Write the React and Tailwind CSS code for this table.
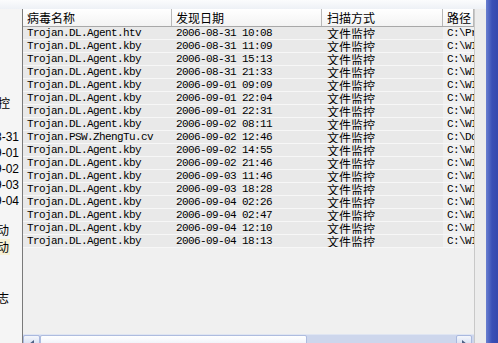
import React from "react";

const rows = [
  ["Trojan.DL.Agent.htv", "2006-08-31 10:08", "C:\\Program Files"],
  ["Trojan.DL.Agent.kby", "2006-08-31 11:09", "C:\\WINDOWS"],
  ["Trojan.DL.Agent.kby", "2006-08-31 15:13", "C:\\WINDOWS"],
  ["Trojan.DL.Agent.kby", "2006-08-31 21:33", "C:\\WINDOWS"],
  ["Trojan.DL.Agent.kby", "2006-09-01 09:09", "C:\\WINDOWS"],
  ["Trojan.DL.Agent.kby", "2006-09-01 22:04", "C:\\WINDOWS"],
  ["Trojan.DL.Agent.kby", "2006-09-01 22:31", "C:\\WINDOWS"],
  ["Trojan.DL.Agent.kby", "2006-09-02 08:11", "C:\\WINDOWS"],
  ["Trojan.PSW.ZhengTu.cv", "2006-09-02 12:46", "C:\\Documents"],
  ["Trojan.DL.Agent.kby", "2006-09-02 14:55", "C:\\WINDOWS"],
  ["Trojan.DL.Agent.kby", "2006-09-02 21:46", "C:\\WINDOWS"],
  ["Trojan.DL.Agent.kby", "2006-09-03 11:46", "C:\\WINDOWS"],
  ["Trojan.DL.Agent.kby", "2006-09-03 18:28", "C:\\WINDOWS"],
  ["Trojan.DL.Agent.kby", "2006-09-04 02:26", "C:\\WINDOWS"],
  ["Trojan.DL.Agent.kby", "2006-09-04 02:47", "C:\\WINDOWS"],
  ["Trojan.DL.Agent.kby", "2006-09-04 12:10", "C:\\WINDOWS"],
  ["Trojan.DL.Agent.kby", "2006-09-04 18:13", "C:\\WINDOWS"],
];

const cjk = "font-['SimSun','Noto_Sans_CJK_SC',sans-serif]";
const mono = "font-['Liberation_Mono','Noto_Sans_CJK_SC',monospace] text-[11px] tracking-[-0.6px]";

// 左侧被裁掉的面板，只露出一点文字
function SidePanel() {
  const item = "flex justify-end overflow-hidden whitespace-nowrap h-[16px] leading-[16px] text-[12px] text-black";
  const date = `${item} pr-[3px] font-['Liberation_Sans',sans-serif]`;
  return (
    <div className={`w-[22px] shrink-0 bg-[#f5f5f5] flex flex-col ${cjk}`}>
      <div className={`${item} mt-[86px] pr-[12px]`}>监控</div>
      <div className={`${date} mt-[18px]`}>2006-08-31</div>
      <div className={date}>2006-09-01</div>
      <div className={date}>2006-09-02</div>
      <div className={date}>2006-09-03</div>
      <div className={date}>2006-09-04</div>
      <div className={`${item} mt-[13px] pr-[13px]`}>自动</div>
      <div className={`${item} mt-[1px] pr-[12px]`}>
        <span className="bg-[#f7f1d6] pr-[1px]">自动</span>
      </div>
      <div className={`${item} mt-[35px] pr-[13px]`}>日志</div>
    </div>
  );
}

function Header() {
  const cell = "h-full flex items-center pl-[4px] border-r border-[#b8b8b8] shrink-0 overflow-hidden whitespace-nowrap";
  return (
    <div className={`flex h-[18px] bg-gradient-to-b from-white to-[#f3f3f3] border-b border-[#a8a8a8] text-[12px] text-black ${cjk}`}>
      <div className={`${cell} w-[149px]`}>病毒名称</div>
      <div className={`${cell} w-[150px]`}>发现日期</div>
      <div className={`${cell} w-[121px] pl-[5px]`}>扫描方式</div>
      <div className={`${cell} w-[31px]`}>路径</div>
    </div>
  );
}

function Row({ name, date, path }) {
  return (
    <div className="flex h-[13px] leading-[13px] border-b border-[#f7f7f7] text-black">
      <div className={`w-[149px] shrink-0 pl-[4px] bg-[#e9e9e9] whitespace-nowrap overflow-hidden ${mono}`}>{name}</div>
      <div className={`w-[150px] shrink-0 pl-[4px] bg-[#e9e9e9] whitespace-nowrap overflow-hidden ${mono}`}>{date}</div>
      <div className={`w-[121px] shrink-0 pl-[5px] bg-[#e9e9e9] text-[12px] leading-[13px] whitespace-nowrap overflow-hidden ${cjk}`}>文件监控</div>
      <div className={`w-[31px] shrink-0 pl-[4px] bg-[#f0f0f0] overflow-hidden whitespace-nowrap ${mono}`}>{path}</div>
    </div>
  );
}

function HScrollBar() {
  return (
    <div className="h-[9px] shrink-0 flex bg-[#cdd6ec] overflow-hidden items-start border-t border-[#dfe5f2]">
      <div className="w-[17px] h-[17px] shrink-0 bg-gradient-to-b from-[#f4f6fb] to-[#c0cdec] border border-[#a9b8de] rounded-[2px] flex items-center justify-center">
        <svg width="6" height="8" viewBox="0 0 6 8">
          <path d="M5 0 L0 4 L5 8 Z" fill="#4d6185" />
        </svg>
      </div>
      <div className="w-[267px] h-[17px] shrink-0 bg-gradient-to-b from-white to-[#e3e8f5] border border-[#aebcdf] rounded-[2px]" />
      <div className="flex-1" />
      <div className="w-[16px] h-[17px] shrink-0 bg-gradient-to-b from-[#f4f6fb] to-[#c0cdec] border border-[#a9b8de] rounded-[2px] flex items-center justify-center">
        <svg width="6" height="8" viewBox="0 0 6 8">
          <path d="M1 0 L6 4 L1 8 Z" fill="#4d6185" />
        </svg>
      </div>
      <div className="w-[2px] shrink-0" />
    </div>
  );
}

export default function App() {
  return (
    <div className="flex w-[498px] h-[343px] overflow-hidden bg-[#f5f5f5]">
      <div className="flex-1 flex flex-col">
        {/* 顶部细条 */}
        <div className="h-[9px] shrink-0 bg-gradient-to-b from-[#fbfcfd] to-[#eef1f6]" />
        <div className="flex flex-1 min-h-0">
          <SidePanel />
          {/* 病毒列表 */}
          <div className="w-[453px] h-full shrink-0 flex flex-col border-l border-[#7a7a7a] border-r border-r-[#c8c8c8] bg-[#f0f0f0]">
            <Header />
            <div className="flex-1 min-h-0">
              {rows.map((r, i) => (
                <Row key={i} name={r[0]} date={r[1]} path={r[2]} />
              ))}
            </div>
            <HScrollBar />
          </div>
          <div className="flex-1 bg-[#ececec]" />
        </div>
      </div>
      {/* 右侧蓝色边框 */}
      <div className="w-[12px] shrink-0 bg-gradient-to-r from-[#6a7fd0] via-[#3a4fb6] to-[#3548ad]" />
    </div>
  );
}
